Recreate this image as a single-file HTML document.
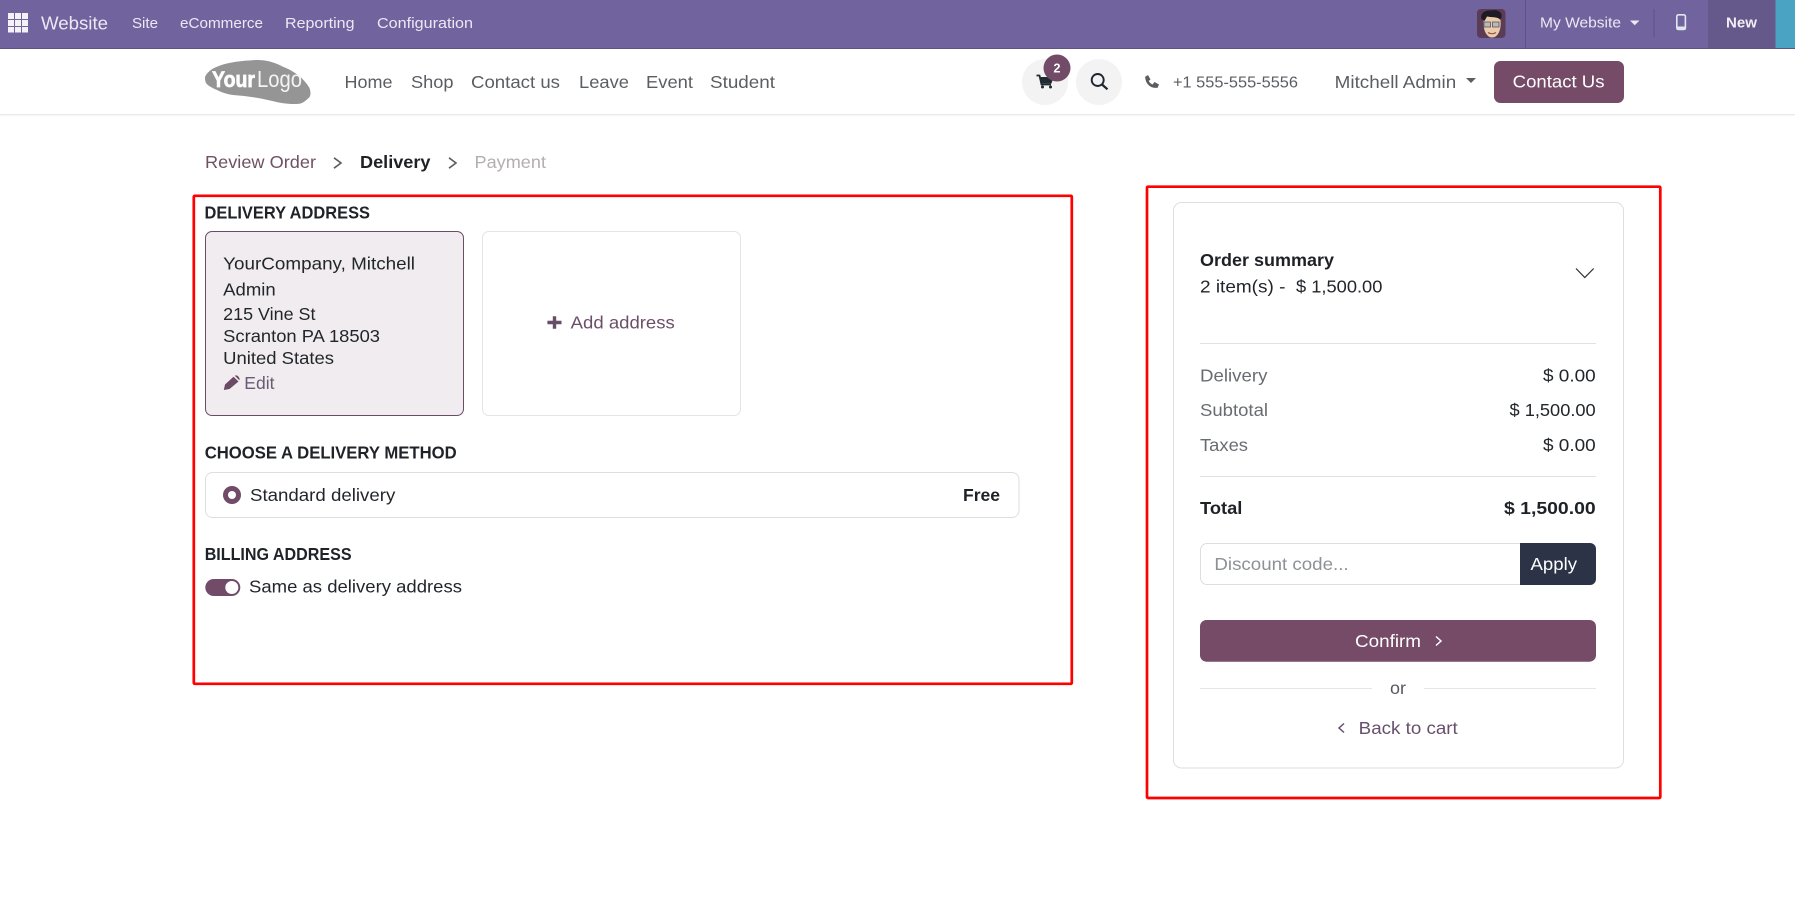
<!DOCTYPE html>
<html lang="en">
<head>
<meta charset="utf-8">
<title>Delivery | My Website</title>
<style>
html,body{margin:0;padding:0;background:#fff;width:1795px;height:922px;overflow:hidden}
svg{display:block}
text{font-family:"Liberation Sans",Arial,sans-serif}
.nav{font-size:14.5px;fill:#ece8f3}
.m{font-size:17.6px;fill:#5a5e63}
.b{font-size:17.6px;fill:#22262b}
.g{font-size:17.6px;fill:#686c71}
.h{font-size:17.5px;font-weight:700;fill:#1f2328}
.s{font-size:17.6px;font-weight:700;fill:#1e2126}
.p{font-size:17.6px;fill:#6b4f68}
</style>
</head>
<body>
<svg xmlns="http://www.w3.org/2000/svg" width="1795" height="922" viewBox="0 0 1795 922">
<rect width="1795" height="922" fill="#fff"/>

<!-- Top bar -->
<rect width="1795" height="49" fill="#71639e"/>
<rect y="48" width="1795" height="1" fill="#5f5289"/>
<g fill="#f4f2f7">
<rect x="8" y="13" width="6" height="6"/><rect x="15" y="13" width="6" height="6"/><rect x="22" y="13" width="6" height="6"/>
<rect x="8" y="20" width="6" height="6"/><rect x="15" y="20" width="6" height="6"/><rect x="22" y="20" width="6" height="6"/>
<rect x="8" y="27" width="6" height="5.5"/><rect x="15" y="27" width="6" height="5.5"/><rect x="22" y="27" width="6" height="5.5"/>
</g>
<text x="41" y="29.5" font-size="18" fill="#ece8f3" textLength="67" lengthAdjust="spacingAndGlyphs">Website</text>
<text class="nav" x="132" y="28" textLength="26" lengthAdjust="spacingAndGlyphs">Site</text>
<text class="nav" x="180" y="28" textLength="83" lengthAdjust="spacingAndGlyphs">eCommerce</text>
<text class="nav" x="285" y="28" textLength="69.5" lengthAdjust="spacingAndGlyphs">Reporting</text>
<text class="nav" x="377" y="28" textLength="96" lengthAdjust="spacingAndGlyphs">Configuration</text>

<!-- Avatar -->
<rect x="1477" y="9" width="28.5" height="29" rx="4" fill="#5a3c56"/>
<path d="M1483.5 21C1483 31 1487 37.5 1492 37.5C1497.5 37.5 1501.5 31 1500.5 20L1497 16H1487Z" fill="#eccbaa"/>
<path d="M1481.5 19C1480 13 1485 10 1491 10.5C1497 9 1503 12 1501.5 17.5L1500 19.5C1497 16.5 1491 17.5 1487 16.5L1484.5 21Z" fill="#1f1b26"/>
<rect x="1484" y="22" width="6.5" height="5" fill="#b9b9bd" stroke="#55555c" stroke-width=".8"/>
<rect x="1492.5" y="22" width="6.5" height="5" fill="#b9b9bd" stroke="#55555c" stroke-width=".8"/>
<path d="M1488 32.5Q1492 35 1496 32.5" stroke="#8c4f45" stroke-width="1.1" fill="none"/>

<rect x="1525" y="0" width="1" height="48" fill="#5f5289"/>
<text x="1540" y="27.7" font-size="14.5" fill="#ece8f3" textLength="81" lengthAdjust="spacingAndGlyphs">My Website</text>
<path d="M1630 20.5H1639.5L1634.7 25.2Z" fill="#ece8f3"/>
<rect x="1653.5" y="9" width="1" height="28" fill="#5f5289"/>
<rect x="1676.8" y="14.8" width="8.6" height="14.6" rx="1.6" fill="none" stroke="#dfe6f2" stroke-width="1.6"/>
<rect x="1676.5" y="26.5" width="9.3" height="3.5" rx="1" fill="#dfe6f2"/>
<rect x="1708" y="0" width="67.5" height="48" fill="#65588b"/>
<text x="1726" y="27.7" font-size="14.5" font-weight="700" fill="#f1eef5" textLength="31" lengthAdjust="spacingAndGlyphs">New</text>
<rect x="1775.5" y="0" width="19.5" height="48" fill="#4ba3c3"/>

<!-- Website header -->
<rect y="49" width="1795" height="65" fill="#fff"/>
<rect y="114" width="1795" height="1.5" fill="#e9ecef"/>
<path d="M205 77C207 72 212 68.5 217 66.7C225 63 240 60.5 257 60C268 60 276 63 283 66.7C293 70.5 304 78 309.5 88C311 93 311 96.5 308 98.5C304 102.5 301 104 296 104C288 104.3 280 103 270 100.5C258 97.5 246 96 233 95C226 94 221 92 217 90C212 88 207 85 206 83C205 81 205 79 205 77Z" fill="#959595"/>
<text x="212" y="87" font-size="22" font-weight="700" fill="#fff" stroke="#fff" stroke-width=".7" textLength="43" lengthAdjust="spacingAndGlyphs">Your</text>
<text x="257" y="87" font-size="23" fill="#f4f4f4" textLength="45" lengthAdjust="spacingAndGlyphs">Logo</text>

<text class="m" x="344.5" y="88" textLength="48" lengthAdjust="spacingAndGlyphs">Home</text>
<text class="m" x="411" y="88" textLength="42.5" lengthAdjust="spacingAndGlyphs">Shop</text>
<text class="m" x="471" y="88" textLength="89" lengthAdjust="spacingAndGlyphs">Contact us</text>
<text class="m" x="579" y="88" textLength="50" lengthAdjust="spacingAndGlyphs">Leave</text>
<text class="m" x="646" y="88" textLength="47" lengthAdjust="spacingAndGlyphs">Event</text>
<text class="m" x="710" y="88" textLength="65" lengthAdjust="spacingAndGlyphs">Student</text>

<circle cx="1045" cy="82" r="23" fill="#f3f3f3"/>
<path d="M1036.5 75.5H1039.5L1041.5 84.5H1051" fill="none" stroke="#1f2a33" stroke-width="1.8"/>
<path d="M1040 77H1053.5L1051.5 83.5H1041.5Z" fill="#1f2a33"/>
<circle cx="1042.5" cy="87" r="1.5" fill="#1f2a33"/><circle cx="1050.5" cy="87" r="1.5" fill="#1f2a33"/>
<circle cx="1057" cy="68" r="13.5" fill="#714b67"/>
<text x="1057" y="72.5" font-size="12.5" font-weight="700" fill="#fff" text-anchor="middle">2</text>
<circle cx="1099" cy="82" r="23" fill="#f3f3f3"/>
<circle cx="1097.7" cy="80" r="6" fill="none" stroke="#1d2630" stroke-width="1.9"/>
<path d="M1102 84.5L1107.5 89.3" stroke="#1d2630" stroke-width="2.2"/>
<path d="M1146.5 76.5C1146.5 83 1151 87 1157 86.5" fill="none" stroke="#5a5e63" stroke-width="2.6"/>
<path d="M1145 77L1148 75L1150.5 79.5L1148 81.5ZM1152.5 84.5L1154.5 82L1159 84.5L1157.5 88Z" fill="#5a5e63"/>
<text x="1173" y="87.7" font-size="15.5" fill="#5a5e63" textLength="125" lengthAdjust="spacingAndGlyphs">+1 555-555-5556</text>
<text class="m" x="1334.7" y="88" textLength="121.5" lengthAdjust="spacingAndGlyphs">Mitchell Admin</text>
<path d="M1466 78H1476L1471 83Z" fill="#5a5e63"/>
<rect x="1494" y="61" width="130" height="42" rx="6.5" fill="#754b68"/>
<text x="1512.7" y="87.7" font-size="17.6" fill="#fff" textLength="91.8" lengthAdjust="spacingAndGlyphs">Contact Us</text>

<!-- Breadcrumb -->
<text x="205" y="168" font-size="17.6" fill="#6f5163" textLength="111" lengthAdjust="spacingAndGlyphs">Review Order</text>
<path d="M334 157.8L341 163L334 168.2" fill="none" stroke="#5a5e63" stroke-width="1.6"/>
<text class="s" x="360" y="168" textLength="70.5" lengthAdjust="spacingAndGlyphs">Delivery</text>
<path d="M449 157.8L456 163L449 168.2" fill="none" stroke="#5a5e63" stroke-width="1.6"/>
<text x="474.5" y="168" font-size="17.6" fill="#b3aeb2" textLength="71.5" lengthAdjust="spacingAndGlyphs">Payment</text>

<!-- Left red box -->
<rect x="193.8" y="195.8" width="878" height="488" rx="1" fill="none" stroke="#f00" stroke-width="2.7"/>

<text class="h" x="204.5" y="218.5" textLength="165.5" lengthAdjust="spacingAndGlyphs">DELIVERY ADDRESS</text>
<rect x="205.5" y="231.5" width="258" height="184" rx="6.5" fill="#f1ecf0" stroke="#6a4d64"/>
<rect x="482.5" y="231.5" width="258" height="184" rx="6.5" fill="#fff" stroke="#e4e4e4"/>
<text class="b" x="223.2" y="269.3" textLength="191.8" lengthAdjust="spacingAndGlyphs">YourCompany, Mitchell</text>
<text class="b" x="223.2" y="295.3" textLength="52.5" lengthAdjust="spacingAndGlyphs">Admin</text>
<text class="b" x="223.2" y="320" textLength="92.3" lengthAdjust="spacingAndGlyphs">215 Vine St</text>
<text class="b" x="223.2" y="342" textLength="156.8" lengthAdjust="spacingAndGlyphs">Scranton PA 18503</text>
<text class="b" x="223.2" y="364" textLength="110.8" lengthAdjust="spacingAndGlyphs">United States</text>
<path d="M223.8 390L225 384.5L233.5 376.8L238.5 381.5L229.5 389ZM234.8 375.8Q236.5 374.8 238.2 376.4Q240.2 378.5 239.3 380.3Z" fill="#6a4a64"/>
<text x="244.3" y="389" font-size="17.6" fill="#6b5a74" textLength="30.2" lengthAdjust="spacingAndGlyphs">Edit</text>
<path d="M552.8 316.3H556.2V320.8H561.5V324.2H556.2V328.7H552.8V324.2H547.4V320.8H552.8Z" fill="#674d66"/>
<text class="p" x="570.7" y="328.7" textLength="104.1" lengthAdjust="spacingAndGlyphs">Add address</text>

<text class="h" x="204.7" y="458.5" textLength="252" lengthAdjust="spacingAndGlyphs">CHOOSE A DELIVERY METHOD</text>
<rect x="205.5" y="472.5" width="813.5" height="45" rx="7" fill="#fff" stroke="#dedede"/>
<circle cx="232" cy="495" r="9" fill="#714b67"/>
<circle cx="232" cy="495" r="4" fill="#fff"/>
<text class="b" x="250" y="501" textLength="145.3" lengthAdjust="spacingAndGlyphs">Standard delivery</text>
<text class="s" x="963" y="501" textLength="37" lengthAdjust="spacingAndGlyphs">Free</text>

<text class="h" x="204.7" y="560" textLength="146.9" lengthAdjust="spacingAndGlyphs">BILLING ADDRESS</text>
<rect x="205.3" y="579" width="35" height="17" rx="8.5" fill="#714b67"/>
<circle cx="231.8" cy="587.5" r="6.5" fill="#fff"/>
<text class="b" x="249" y="592.3" textLength="213" lengthAdjust="spacingAndGlyphs">Same as delivery address</text>

<!-- Right red box -->
<rect x="1147" y="186.7" width="513.3" height="611.3" rx="1" fill="none" stroke="#f00" stroke-width="2.7"/>

<rect x="1173.5" y="202.5" width="450" height="565.5" rx="8" fill="#fff" stroke="#dedede"/>
<text class="s" x="1200" y="266" textLength="134" lengthAdjust="spacingAndGlyphs">Order summary</text>
<text class="b" x="1200" y="292.3" textLength="85.4" lengthAdjust="spacingAndGlyphs">2 item(s) -</text>
<text class="b" x="1296" y="292.3" textLength="86.4" lengthAdjust="spacingAndGlyphs">$ 1,500.00</text>
<path d="M1576 268.5L1584.8 277.5L1593.7 268.5" fill="none" stroke="#2a2e33" stroke-width="1.2"/>
<rect x="1200" y="343" width="396" height="1" fill="#dee2e6"/>
<text class="g" x="1200" y="381.3" textLength="67.4" lengthAdjust="spacingAndGlyphs">Delivery</text>
<text class="b" x="1543" y="381.3" textLength="52.7" lengthAdjust="spacingAndGlyphs">$ 0.00</text>
<text class="g" x="1200" y="416" textLength="68" lengthAdjust="spacingAndGlyphs">Subtotal</text>
<text class="b" x="1509.5" y="416" textLength="86.2" lengthAdjust="spacingAndGlyphs">$ 1,500.00</text>
<text class="g" x="1200" y="451" textLength="48" lengthAdjust="spacingAndGlyphs">Taxes</text>
<text class="b" x="1543" y="451" textLength="52.7" lengthAdjust="spacingAndGlyphs">$ 0.00</text>
<rect x="1200" y="476" width="396" height="1" fill="#dee2e6"/>
<text class="s" x="1200" y="514" textLength="42.4" lengthAdjust="spacingAndGlyphs">Total</text>
<text class="s" x="1504" y="514" textLength="91.7" lengthAdjust="spacingAndGlyphs">$ 1,500.00</text>

<rect x="1200.5" y="543.5" width="395" height="41" rx="6.5" fill="#fff" stroke="#dedede"/>
<text x="1214.4" y="570" font-size="17.6" fill="#8d9196" textLength="134.2" lengthAdjust="spacingAndGlyphs">Discount code...</text>
<path d="M1520 543H1590A6 6 0 0 1 1596 549V579A6 6 0 0 1 1590 585H1520Z" fill="#2d3347"/>
<text x="1530.5" y="570" font-size="17.6" fill="#fff" textLength="46.5" lengthAdjust="spacingAndGlyphs">Apply</text>

<rect x="1200" y="620" width="396" height="41.7" rx="6.5" fill="#754b68"/>
<text x="1355" y="647" font-size="17.6" fill="#fff" textLength="66" lengthAdjust="spacingAndGlyphs">Confirm</text>
<path d="M1436 636.5L1441 641L1436 645.5" fill="none" stroke="#fff" stroke-width="1.5"/>

<rect x="1200" y="688" width="172" height="1" fill="#e4e6e8"/>
<rect x="1424" y="688" width="172" height="1" fill="#e4e6e8"/>
<text x="1390" y="694" font-size="17.6" fill="#55595e" textLength="16" lengthAdjust="spacingAndGlyphs">or</text>
<path d="M1344 723.5L1339 728L1344 732.5" fill="none" stroke="#674f6d" stroke-width="1.5"/>
<text x="1358.7" y="734" font-size="17.6" fill="#674f6d" textLength="99.1" lengthAdjust="spacingAndGlyphs">Back to cart</text>
</svg>
</body>
</html>
